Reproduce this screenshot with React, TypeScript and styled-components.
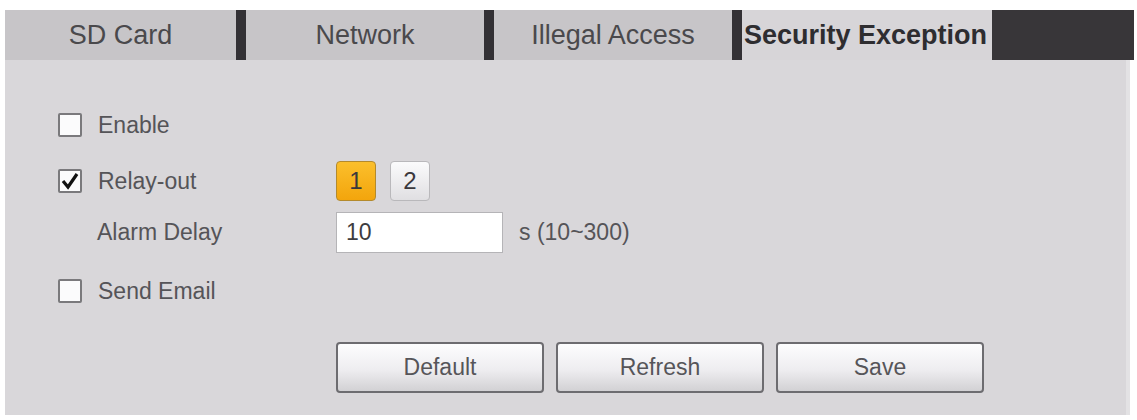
import React from 'react'
import styled, { createGlobalStyle } from 'styled-components'

const GlobalStyle = createGlobalStyle`
  body {
    margin: 0;
    background: #ffffff;
    font-family: "Liberation Sans", Arial, sans-serif;
  }
`

const StyledPage = styled.div`
  width: 1137px;
  height: 420px;
  padding: 10px 0 0 5px;
  box-sizing: border-box;
  overflow: hidden;
`

const TabBar = styled.div`
  display: flex;
  height: 50px;
  width: 1129px;
  background: #c7c5c8;
`

const Tab = styled.div<{ $active?: boolean; $width: number }>`
  width: ${(p) => p.$width}px;
  display: flex;
  align-items: center;
  justify-content: ${(p) => (p.$active ? 'flex-start' : 'center')};
  padding-left: ${(p) => (p.$active ? '2px' : '0')};
  box-sizing: border-box;
  font-size: 27px;
  white-space: nowrap;
  color: ${(p) => (p.$active ? '#2e2d30' : '#4a494c')};
  font-weight: ${(p) => (p.$active ? 'bold' : 'normal')};
  background: ${(p) => (p.$active ? '#d7d5d8' : '#c7c5c8')};
`

const TabDivider = styled.div`
  width: 10px;
  background: #333135;
`

const TabFiller = styled.div`
  flex: 1;
  background: #383639;
`

const Panel = styled.div`
  width: 1125px;
  height: 355px;
  background: #d9d7da;
  border-right: 4px solid #e3e2e4;
  box-sizing: border-box;
  padding: 40px 0 0 53px;
  display: flex;
  flex-direction: column;
  color: #555458;
  font-size: 23px;
`

const Row = styled.div<{ $height: number; $gap: number }>`
  display: flex;
  align-items: center;
  height: ${(p) => p.$height}px;
  margin-top: ${(p) => p.$gap}px;
`

const LabelCell = styled.div<{ $indent?: boolean }>`
  width: 278px;
  display: flex;
  align-items: center;
  gap: 16px;
  padding-left: ${(p) => (p.$indent ? '39px' : '0')};
  box-sizing: border-box;
`

const Box = styled.span`
  width: 24px;
  height: 24px;
  box-sizing: border-box;
  border: 2px solid #7a797c;
  border-radius: 2px;
  background: #fbfbfc;
  display: inline-flex;
  align-items: center;
  justify-content: center;
`

const Controls = styled.div`
  display: flex;
  align-items: center;
  gap: 14px;
`

const RelayButton = styled.button<{ $on?: boolean }>`
  width: 40px;
  height: 40px;
  padding: 0;
  border-radius: 4px;
  font-family: inherit;
  font-size: 24px;
  color: #3a383c;
  border: 1.5px solid ${(p) => (p.$on ? '#b48a2c' : '#b9b8bb')};
  background: ${(p) =>
    p.$on
      ? 'linear-gradient(#fbbf2c, #f3a50c)'
      : 'linear-gradient(#fbfbfc, #e0dfe2)'};
`

const TextInput = styled.div`
  width: 167px;
  height: 41px;
  box-sizing: border-box;
  border: 1.5px solid #b5b4b7;
  background: #ffffff;
  padding-left: 9px;
  display: flex;
  align-items: center;
  color: #3d3c40;
  font-size: 23px;
`

const Hint = styled.span`
  margin-left: 2px;
`

const ButtonRow = styled.div`
  display: flex;
  gap: 12px;
  margin: 30px 0 0 278px;
`

const ActionButton = styled.button`
  width: 208px;
  height: 51px;
  border: 2px solid #6d6c70;
  border-radius: 4px;
  background: linear-gradient(#fdfdfe 0%, #eeedf0 55%, #d2d1d4 100%);
  font-family: inherit;
  font-size: 23px;
  color: #565559;
`

function CheckBox({ checked }: { checked?: boolean }) {
  return (
    <Box>
      {checked && (
        <svg width="20" height="20" viewBox="0 0 20 20">
          <polyline points="3,10 8,16 17,3" fill="none" stroke="#111" strokeWidth="3.2" />
        </svg>
      )}
    </Box>
  )
}

export default function App() {
  return (
    <StyledPage>
      <GlobalStyle />
      <TabBar>
        <Tab $width={231}>SD Card</Tab>
        <TabDivider />
        <Tab $width={238}>Network</Tab>
        <TabDivider />
        <Tab $width={238}>Illegal Access</Tab>
        <TabDivider />
        <Tab $width={250} $active>Security Exception</Tab>
        <TabFiller />
      </TabBar>
      <Panel>
        <Row $height={50} $gap={0}>
          <LabelCell>
            <CheckBox />
            Enable
          </LabelCell>
        </Row>
        <Row $height={42} $gap={10}>
          <LabelCell>
            <CheckBox checked />
            Relay-out
          </LabelCell>
          <Controls>
            <RelayButton $on>1</RelayButton>
            <RelayButton>2</RelayButton>
          </Controls>
        </Row>
        <Row $height={42} $gap={9}>
          <LabelCell $indent>Alarm Delay</LabelCell>
          <Controls>
            <TextInput>10</TextInput>
            <Hint>s (10~300)</Hint>
          </Controls>
        </Row>
        <Row $height={42} $gap={17}>
          <LabelCell>
            <CheckBox />
            Send Email
          </LabelCell>
        </Row>
        <ButtonRow>
          <ActionButton>Default</ActionButton>
          <ActionButton>Refresh</ActionButton>
          <ActionButton>Save</ActionButton>
        </ButtonRow>
      </Panel>
    </StyledPage>
  )
}
